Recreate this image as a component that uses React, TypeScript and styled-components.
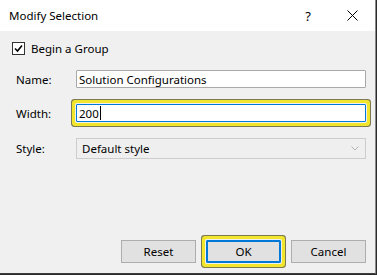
import { createGlobalStyle, styled } from 'styled-components';

const GlobalStyle = createGlobalStyle`
  html, body {
    margin: 0;
    padding: 0;
    background: #2b2b2b;
  }
  body {
    font-family: "Noto Sans", "Liberation Sans", sans-serif;
    font-size: 11.5px;
    color: #000;
  }
`;

const Window = styled.div`
  width: 375px;
  height: 273px;
  border-right: 1px solid #8a8a8a;
  border-bottom: 1px solid #3c3c3c;
  background: #f0f0f0;
  display: flex;
  flex-direction: column;
`;

const TitleBar = styled.div`
  height: 31px;
  background: #fff;
  display: flex;
  align-items: center;
  padding-left: 9px;
`;

const Title = styled.div`
  flex: 1;
  font-size: 11.5px;
  padding-bottom: 1px;
`;

const TitleButton = styled.div<{ $w: number }>`
  width: ${(p) => p.$w}px;
  height: 31px;
  display: flex;
  align-items: center;
  justify-content: center;
  font-size: 13px;
`;

const Body = styled.div`
  flex: 1;
  display: flex;
  flex-direction: column;
  padding: 9px 9px 10px 12px;
`;

const CheckRow = styled.label`
  display: flex;
  align-items: center;
  gap: 6px;
  height: 17px;
`;

const CheckBox = styled.span`
  width: 11px;
  height: 11px;
  border: 1px solid #333;
  background: #fff;
  display: flex;
  align-items: center;
  justify-content: center;
`;

const Form = styled.div`
  margin: 13px 0 0 4px;
  display: grid;
  grid-template-columns: 60px 1fr;
  grid-auto-rows: auto;
  row-gap: 16px;
  align-items: center;
`;

const Label = styled.div``;

const Field = styled.div<{ $focused?: boolean }>`
  height: 16px;
  border: 1px solid ${(p) => (p.$focused ? '#0078d7' : '#a9a9a9')};
  background: #fff;
  display: flex;
  align-items: center;
  padding-left: 2px;
  border-radius: 1px;
  box-shadow: ${(p) =>
    p.$focused ? '0 0 0 1px #f0f0f0, 0 0 0 4px #f2e62c, 0 0 0 5px #7d7a50' : 'none'};
`;

const Caret = styled.span`
  display: inline-block;
  width: 1px;
  height: 14px;
  background: #000;
  margin-left: 1px;
`;

const Combo = styled.div`
  height: 19px;
  border: 1px solid #cdcdcd;
  background: #efefef;
  display: flex;
  align-items: center;
  padding-left: 5px;
  padding-right: 6px;
  justify-content: space-between;
`;

const Footer = styled.div`
  margin-top: auto;
  display: flex;
  justify-content: flex-end;
  gap: 10px;
`;

const Button = styled.button<{ $default?: boolean }>`
  width: 75px;
  height: 23px;
  font-family: inherit;
  font-size: 11.5px;
  color: #000;
  background: #e1e1e1;
  border: 1px solid ${(p) => (p.$default ? '#0078d7' : '#adadad')};
  box-shadow: ${(p) =>
    p.$default
      ? 'inset 0 0 0 1px #0078d7, 0 0 0 1px #f0f0f0, 0 0 0 4px #f2e62c, 0 0 0 5px #7d7a50'
      : 'none'};
  border-radius: ${(p) => (p.$default ? '1px' : '0')};
  padding: 0;
`;

export default function App() {
  return (
    <>
      <GlobalStyle />
      <Window>
        <TitleBar>
          <Title>Modify Selection</Title>
          <TitleButton $w={42}>?</TitleButton>
          <TitleButton $w={46}>
            <svg width="11" height="11" viewBox="0 0 11 11">
              <path d="M0.5 0.5 L10.5 10.5 M10.5 0.5 L0.5 10.5" stroke="#000" strokeWidth="1" />
            </svg>
          </TitleButton>
        </TitleBar>
        <Body>
          <CheckRow>
            <CheckBox>
              <svg width="9" height="9" viewBox="0 0 9 9">
                <path d="M1 4.5 L3.5 7 L8 1.5" stroke="#000" strokeWidth="1.6" fill="none" />
              </svg>
            </CheckBox>
            Begin a Group
          </CheckRow>
          <Form>
            <Label>Name:</Label>
            <Field>Solution Configurations</Field>
            <Label>Width:</Label>
            <Field $focused>
              200
              <Caret />
            </Field>
            <Label>Style:</Label>
            <Combo>
              <span>Default style</span>
              <svg width="8" height="5" viewBox="0 0 8 5">
                <path d="M0.5 0.5 L4 4 L7.5 0.5" stroke="#b4b4b4" strokeWidth="1" fill="none" />
              </svg>
            </Combo>
          </Form>
          <Footer>
            <Button>Reset</Button>
            <Button $default>OK</Button>
            <Button>Cancel</Button>
          </Footer>
        </Body>
      </Window>
    </>
  );
}
